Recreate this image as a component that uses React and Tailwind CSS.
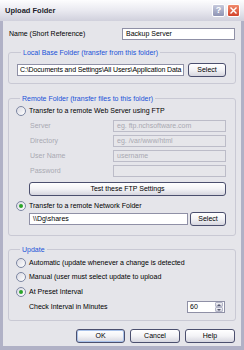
const font = { fontFamily: '"Liberation Sans", Arial, sans-serif' };

const Radio = ({ checked = false }) => (
  <span className="w-[10px] h-[10px] rounded-full border border-[#7c86a2] bg-linear-to-br from-[#d9d9e2] to-white flex items-center justify-center shrink-0">
    {checked && <span className="w-[4px] h-[4px] rounded-full bg-[#2aa52a]" />}
  </span>
);

const Button = ({ children, className = '', primary = false }) => (
  <div
    className={`h-[14px] rounded-[3px] border border-[#4b4f6e] bg-linear-to-b from-white via-[#f3f3f6] to-[#d6d6df] flex items-center justify-center text-[7px] text-black ${
      primary ? 'shadow-[inset_0_0_0_1px_#a9c2ea]' : ''
    } ${className}`}
  >
    {children}
  </div>
);

const TextBox = ({ value, className = '', disabled = false }) => (
  <div
    className={`h-[12px] border flex items-center px-[3px] text-[7px] whitespace-nowrap overflow-hidden ${
      disabled ? 'border-[#bcbcc8] bg-[#e6e6ea] text-[#a9a9b2]' : 'border-[#8f90a6] bg-white text-black'
    } ${className}`}
  >
    {value}
  </div>
);

const Group = ({ title, className = '', children }) => (
  <fieldset className={`mx-[5px] border border-[#c9c9d4] rounded-[3px] ${className}`}>
    <legend className="ml-[4px] px-[2px] text-[7px] leading-[9px] text-[#1a52d8]">{title}</legend>
    {children}
  </fieldset>
);

const FtpRow = ({ label, placeholder }) => (
  <div className="flex items-center h-[12px] ml-[14px]">
    <span className="w-[83px] text-[7px] text-[#a9a9b2]">{label}</span>
    <TextBox value={placeholder} disabled className="flex-1" />
  </div>
);

export default function App() {
  return (
    <div
      className="w-[244px] h-[350px] bg-[#b0b1c6] flex flex-col overflow-hidden select-none"
      style={font}
    >
      {/* title bar */}
      <div className="h-[21px] shrink-0 bg-linear-to-b from-[#fdfdfe] via-[#e9e9f0] to-[#d0d0dc] flex items-center pl-[5px] pr-[4px]">
        <span className="text-[7.5px] font-bold text-[#1c1c2a] flex-1">Upload Folder</span>
        <div className="flex gap-[2px]">
          <div className="w-[13px] h-[13px] rounded-[2px] border border-white bg-linear-to-b from-[#c6c9dc] to-[#8f94b4] flex items-center justify-center text-white text-[9px] font-bold leading-none">
            ?
          </div>
          <div className="w-[13px] h-[13px] rounded-[2px] border border-white bg-linear-to-b from-[#f08a6c] to-[#d2402a] flex items-center justify-center">
            <svg width="7" height="7" viewBox="0 0 7 7">
              <path d="M1 1L6 6M6 1L1 6" stroke="white" strokeWidth="1.4" strokeLinecap="square" />
            </svg>
          </div>
        </div>
      </div>

      {/* body */}
      <div className="flex-1 mx-[3px] mb-[4px] bg-[#e5e5ea] flex flex-col">
        <div className="mt-[7px] flex items-center h-[12px] pl-[6px] pr-[6px]">
          <span className="w-[113px] text-[7px] text-black">Name (Short Reference)</span>
          <TextBox value="Backup Server" className="flex-1" />
        </div>

        <Group title="Local Base Folder (transfer from this folder)" className="mt-[8px] pl-[8px] pr-[9px] pb-[6px]">
          <div className="mt-[6px] flex items-center gap-[4px] h-[14px]">
            <TextBox
              value={'C:\\Documents and Settings\\All Users\\Application Data'}
              className="w-[167px] !px-[2px] tracking-[-0.13px]"
            />
            <Button className="flex-1">Select</Button>
          </div>
        </Group>

        <Group title="Remote Folder (transfer files to this folder)" className="mt-[10px] pl-[7px] pr-[9px] pb-[9px]">
          <div className="mt-[3px] flex items-center gap-[3px] h-[10px]">
            <Radio />
            <span className="text-[7px] text-black">Transfer to a remote Web Server using FTP</span>
          </div>
          <div className="mt-[4px] flex flex-col gap-[3px]">
            <FtpRow label="Server" placeholder="eg. ftp.nchsoftware.com" />
            <FtpRow label="Directory" placeholder="eg. /var/www/html" />
            <FtpRow label="User Name" placeholder="username" />
            <FtpRow label="Password" placeholder="" />
          </div>
          <Button className="mt-[5px] ml-[13px] h-[13px]">Test these FTP Settings</Button>
          <div className="mt-[5px] flex items-center gap-[3px] h-[10px]">
            <Radio checked />
            <span className="text-[7px] text-black">Transfer to a remote Network Folder</span>
          </div>
          <div className="mt-[1px] ml-[13px] flex items-center gap-[2px] h-[14px]">
            <TextBox value={'\\\\Dg\\shares'} className="w-[159px]" />
            <Button className="flex-1">Select</Button>
          </div>
        </Group>

        <Group title="Update" className="mt-[9px] pl-[7px] pr-[10px] pb-[7px]">
          <div className="mt-[4px] flex flex-col">
            <div className="flex items-center gap-[3px] h-[10px]">
              <Radio />
              <span className="text-[7px] text-black">Automatic (update whenever a change is detected</span>
            </div>
            <div className="mt-[4px] flex items-center gap-[3px] h-[10px]">
              <Radio />
              <span className="text-[7px] text-black">Manual (user must select update to upload</span>
            </div>
            <div className="mt-[5px] flex items-center gap-[3px] h-[10px]">
              <Radio checked />
              <span className="text-[7px] text-black">At Preset Interval</span>
            </div>
          </div>
          <div className="mt-[4px] ml-[13px] flex items-center h-[12px]">
            <span className="flex-1 text-[7px] text-black">Check Interval in Minutes</span>
            <div className="w-[38px] h-[12px] border border-[#8f90a6] bg-white flex items-center">
              <span className="flex-1 pl-[2px] text-[7px] text-black">60</span>
              <div className="w-[8px] h-[10px] mr-[1px] flex flex-col">
                <div className="flex-1 rounded-[1px] bg-linear-to-b from-[#f2f2f6] to-[#cfcfda] border border-[#b4b6c8] flex items-center justify-center">
                  <svg width="4" height="2" viewBox="0 0 4 2"><path d="M0 2L2 0L4 2Z" fill="#55586e" /></svg>
                </div>
                <div className="flex-1 rounded-[1px] bg-linear-to-b from-[#f2f2f6] to-[#cfcfda] border border-[#b4b6c8] flex items-center justify-center">
                  <svg width="4" height="2" viewBox="0 0 4 2"><path d="M0 0L4 0L2 2Z" fill="#55586e" /></svg>
                </div>
              </div>
            </div>
          </div>
        </Group>

        <div className="mt-[8px] flex justify-end gap-[5px] pr-[6px]">
          <Button primary className="w-[49px]">OK</Button>
          <Button className="w-[50px]">Cancel</Button>
          <Button className="w-[50px]">Help</Button>
        </div>
      </div>
    </div>
  );
}
